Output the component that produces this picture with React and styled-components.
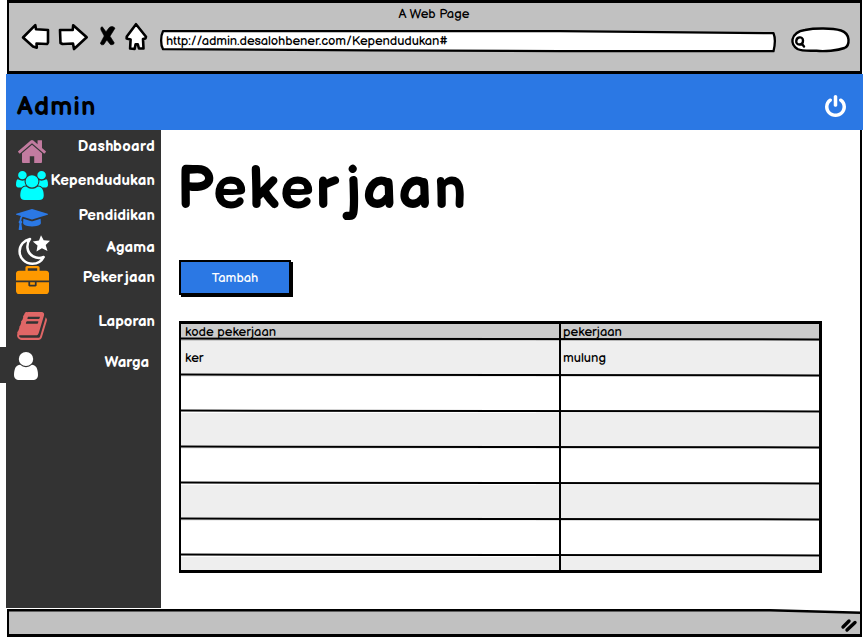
import React from 'react';
import styled, { createGlobalStyle } from 'styled-components';

const Global = createGlobalStyle`
  * { box-sizing: border-box; }
  body { margin: 0; background: #fff; color: #000; font-family: "Balsamiq Sans", Lato, sans-serif; overflow: hidden; }
  h1, h2, p { margin: 0; }
  svg { display: block; overflow: visible; flex: none; }
`;

const Page = styled.div`
  width: 863px;
  height: 638px;
  padding: 0 0 1px 6px;
  overflow: hidden;
  display: flex;
  flex-direction: column;
`;

const BrowserBar = styled.header`
  height: 74px;
  margin: 0 0 0 1px;
  width: 855px;
  padding-top: 4px;
  background: #c1c1c1;
  border: 3px solid #000;
  border-left-width: 2px;
  border-right-width: 2px;
  display: flex;
  flex-direction: column;
  flex: none;
`;

const PageTitle = styled.p`
  height: 16px;
  padding-right: 1px;
  text-align: center;
  font-size: 13px;
  line-height: 15px;
`;

const Controls = styled.div`
  display: flex;
  align-items: flex-start;
  padding: 0 9px 0 12px;
`;

const Buttons = styled.div`
  width: 139px;
  display: flex;
  align-items: flex-start;
  margin-top: -1px;
`;

const Address = styled.div`
  position: relative;
  width: 616px;
  height: 22px;
  margin-top: 7px;
  padding: 3px 0 0 6px;
  font-size: 13px;
  line-height: 17px;
  letter-spacing: -0.1px;
  white-space: nowrap;
`;

const AddressOutline = styled.svg`
  position: absolute;
  inset: 0;
`;

const AddressText = styled.span`
  position: relative;
`;

const Search = styled.div`
  margin: 4px 0 0 14px;
`;

const AppBar = styled.div`
  height: 56px;
  flex: none;
  display: flex;
  align-items: center;
  justify-content: space-between;
  padding: 8px 17px 0 11px;
  background: #2b78e4;
`;

const Brand = styled.h2`
  padding: 4px 0 0 0;
  font-size: 26px;
  line-height: 32px;
  font-weight: 700;
  letter-spacing: 1.1px;
`;

const Body = styled.div`
  display: flex;
  height: 479px;
  flex: none;
`;

const Sidebar = styled.nav`
  width: 155px;
  background: #333;
  height: 478px;
  flex: none;
  padding-top: 4px;
`;

const Item = styled.a`
  height: ${(p) => p.$h}px;
  display: flex;
  align-items: flex-start;
  justify-content: space-between;
  padding: 0 6px 0 ${(p) => p.$inset ?? 10}px;
  color: #fff;
  background: #333;
`;

const IconSlot = styled.span`
  display: block;
  flex: none;
  width: 33px;
  padding-top: ${(p) => p.$drop ?? 0}px;
`;

const Label = styled.span`
  padding-top: ${(p) => p.$drop ?? 1}px;
  font-size: 15px;
  line-height: 24px;
  font-weight: 700;
  letter-spacing: ${(p) => p.$spacing ?? 0.15}px;
  white-space: nowrap;
`;

const Outset = styled(Item)`
  margin-left: -6px;
  padding-left: 14px;
  padding-right: 12px;
`;

const Content = styled.main`
  width: 701px;
  padding: 20px 0 0 17px;
  border-right: 2px solid #000;
  margin-right: auto;
`;

const Heading = styled.h1`
  height: 80px;
  margin-left: -1px;
  padding-top: 5px;
  font-size: 59px;
  line-height: 72px;
  font-weight: 700;
  letter-spacing: 1.7px;
`;

const Wide = styled.span`
  letter-spacing: ${(p) => p.$spacing}px;
`;

const Button = styled.button`
  display: block;
  width: 112px;
  height: 35px;
  margin: 30px 0 0 1px;
  padding: 0;
  background: #2b78e4;
  border: 2px solid #000;
  box-shadow: 2px 2px 0 #000;
  color: #fff;
  font: 400 13px/30px "Balsamiq Sans", Lato, sans-serif;
`;

const Table = styled.div`
  width: 643px;
  height: 252px;
  margin: 26px 0 0 1px;
  border: 3px solid #000;
  border-left-width: 2px;
  overflow: hidden;
`;

const Row = styled.div`
  position: relative;
  display: grid;
  grid-template-columns: 380px 1fr;
  height: ${(p) => (p.$head ? 17 : 36)}px;
  line-height: ${(p) => (p.$head ? 16 : 34)}px;
  background: ${(p) => (p.$head ? '#ccc' : p.$shaded ? '#eee' : '#fff')};
  font-size: 13px;

  &::after {
    content: "";
    position: absolute;
    left: 0;
    right: 0;
    bottom: 1px;
    height: 2px;
    background: #000;
    transform: rotate(0.08deg);
    z-index: 1;
  }
`;

const Cell = styled.div`
  padding-left: ${(p) => (p.$first ? 4 : 2)}px;
  border-right: ${(p) => (p.$first ? '2px solid #000' : 'none')};
`;

const Footer = styled.footer`
  width: 855px;
  height: 28px;
  margin-left: 1px;
  flex: none;
  background: #c1c1c1;
  border: solid #000;
  border-width: 0 2px 3px;
`;

const home = 'M1472 992v480q0 26-19 45t-45 19h-384v-384h-256v384h-384q-26 0-45-19t-19-45v-480q0-1 .5-3t.5-3l575-474 575 474q1 2 1 6zm223-69l-62 74q-8 9-21 11h-3q-13 0-21-7l-692-577-692 577q-12 8-24 7-13-2-21-11l-62-74q-8-10-7-23.5t11-21.5l719-599q32-26 76-26t76 26l244 204v-195q0-14 9-23t23-9h192q14 0 23 9t9 23v408l219 182q10 8 11 21.5t-7 23.5z';
const users = 'M529 896q-162 5-265 128h-134q-82 0-138-40.5t-56-118.5q0-353 124-353 6 0 43.5 21t97.5 42.5 119 21.5q67 0 133-23-5 37-5 66 0 139 81 256zm1071 637q0 120-73 189.5t-194 69.5h-874q-121 0-194-69.5t-73-189.5q0-53 3.5-103.5t14-109 26.5-108.5 43-97.5 62-81 85.5-53.5 111.5-20q10 0 43 21.5t73 48 107 48 135 21.5 135-21.5 107-48 73-48 43-21.5q61 0 111.5 20t85.5 53.5 62 81 43 97.5 26.5 108.5 14 109 3.5 103.5zm-1024-1277q0 106-75 181t-181 75-181-75-75-181 75-181 181-75 181 75 75 181zm704 384q0 159-112.5 271.5t-271.5 112.5-271.5-112.5-112.5-271.5 112.5-271.5 271.5-112.5 271.5 112.5 112.5 271.5zm576 225q0 78-56 118.5t-138 40.5h-134q-103-123-265-128 81-117 81-256 0-29-5-66 66 23 133 23 59 0 119-21.5t97.5-42.5 43.5-21q124 0 124 353zm-128-609q0 106-75 181t-181 75-181-75-75-181 75-181 181-75 181 75 75 181z';
const cap = 'M1774 836l18 316q4 69-82 128t-235 93.5-323 34.5-323-34.5-235-93.5-82-128l18-316 574 181q22 7 48 7t48-7zm530-324q0 23-22 31l-1120 352q-4 1-10 1t-10-1l-652-206q-43 34-71 111.5t-34 178.5q63 36 63 109 0 69-58 107l58 433q2 14-8 25-9 11-24 11h-192q-15 0-24-11-10-11-8-25l58-433q-58-38-58-107 0-73 65-111 11-207 98-330l-333-104q-22-8-22-31t22-31l1120-352q4-1 10-1t10 1l1120 352q22 8 22 31z';
const briefcase = 'M640 256h512v-128h-512v128zm1152 640v480q0 66-47 113t-113 47h-1472q-66 0-113-47t-47-113v-480h672v160q0 26 19 45t45 19h320q26 0 45-19t19-45v-160h672zm-768 0v128h-256v-128h256zm768-480v384h-1792v-384q0-66 47-113t113-47h352v-160q0-40 28-68t68-28h576q40 0 68 28t28 68v160h352q66 0 113 47t47 113z';
const book = 'M1703 478q40 57 18 129l-275 906q-19 64-76.5 107.5t-122.5 43.5h-923q-77 0-148.5-53.5t-99.5-131.5q-24-67-2-127 0-4 3-27t4-37q1-8-3-21.5t-3-19.5q2-11 8-21t16.5-23.5 16.5-23.5q23-38 45-91.5t30-91.5q3-10 .5-30t-.5-28q3-11 17-28t17-23q21-36 42-92t25-90q1-9-2.5-32t.5-28q4-13 22-30.5t22-22.5q19-26 42.5-84.5t27.5-96.5q1-8-3-25.5t-2-26.5q2-8 9-18t18-23 17-21q8-12 16.5-30.5t15-35 16-36 19.5-32 26.5-23.5 36-11.5 47.5 5.5l-1 3q38-9 51-9h761q74 0 114 56t18 130l-274 906q-36 119-71.5 153.5t-128.5 34.5h-869q-27 0-38 15-11 16-1 43 24 70 144 70h923q29 0 56-15.5t35-41.5l300-987q7-22 5-57 38 15 59 43zm-1064 2q-4 13 2 22.5t20 9.5h608q13 0 25.5-9.5t16.5-22.5l21-64q4-13-2-22.5t-20-9.5h-608q-13 0-25.5 9.5t-16.5 22.5zm-83 256q-4 13 2 22.5t20 9.5h608q13 0 25.5-9.5t16.5-22.5l21-64q4-13-2-22.5t-20-9.5h-608q-13 0-25.5 9.5t-16.5 22.5z';
const user = 'M1536 1399q0 109-62.5 187t-150.5 78h-854q-88 0-150.5-78t-62.5-187q0-85 8.5-160.5t31.5-152 58.5-131 94-89 134.5-34.5q131 128 313 128t313-128q76 0 134.5 34.5t94 89 58.5 131 31.5 152 8.5 160.5zm-256-887q0 159-112.5 271.5t-271.5 112.5-271.5-112.5-112.5-271.5 112.5-271.5 271.5-112.5 271.5 112.5 112.5 271.5z';
const power = 'M1664 896q0 156-61 298t-164 245-245 164-298 61-298-61-245-164-164-245-61-298q0-182 80.5-343t226.5-270q43-32 95.5-25t83.5 50q32 42 24.5 94.5t-49.5 84.5q-98 74-151.5 181t-53.5 228q0 104 40.5 198.5t109.5 163.5 163.5 109.5 198.5 40.5 198.5-40.5 163.5-109.5 109.5-163.5 40.5-198.5q0-121-53.5-228t-151.5-181q-42-32-49.5-84.5t24.5-94.5q31-43 84-50t95 25q146 109 226.5 270t80.5 343zm-640-768v640q0 52-38 90t-90 38-90-38-38-90v-640q0-52 38-90t90-38 90 38 38 90z';

const Glyph = ({ d, box, w, h, color }) => (
  <svg width={w} height={h} viewBox={box} preserveAspectRatio="none" fill={color}>
    <path d={d} />
  </svg>
);

const MoonStar = () => (
  <svg width="33" height="31" viewBox="0 0 33 31">
    <path d="M13 4C7 5.300 2.600 10 2.600 16.300c0 7 5.700 12.500 12.800 12.500 5 0 9.200-2.600 11.300-6.800-7.500 3-15.300-1.700-16.200-9C10.100 9.500 11 6.500 13 4Z" fill="none" stroke="#fff" strokeWidth="2.500" strokeLinejoin="round" />
    <path d="M24 0.300l2.700 5 6.300.5-4.300 4.200 1.800 6-5.600-2.800-5.400 3.300 1-6-4.700-4.100 6.200-1Z" fill="#fff" />
  </svg>
);

const NavButtons = () => (
  <svg width="128" height="30" viewBox="21 22 128 30" fill="#fff" stroke="#000" strokeWidth="2.600" strokeLinejoin="round">
    <path d="M23 37.500L35.300 25.200l.7 4 12 .8v12.500l-.8 1.500-10.700-.5 .3 4.200-3.800-1.200Z" />
    <path d="M60 30l12.700 0 0.500-4.800L86.700 37.300 74 49l-1-5.500-10.500.5-2-1Z" />
    <path d="M102.300 26.800l3.700 5 3.300-4.300c2-1.500 4.200-1 5.700.7l-5 8 4.200 6.500c0 1.800-2 2.300-3.800 1.800l-3.600-4.500-3 4.500c-2 .8-3.500 0-3.300-1.500l3.700-7-3.200-6c-.5-1.500-.2-3.200 1.300-3.200Z" fill="#000" strokeWidth="0.600" />
    <path d="M136 24.200l10 12.500-.5 1.800-2.500.5.5 9.500h-4.500l-1.200-4.200h-2.200l-1 4.700-4.500-.5.500-9-4-1 .2-2Z" />
  </svg>
);

const SearchPill = () => (
  <svg width="60" height="26" viewBox="790 28 60 26" fill="none" stroke="#000" strokeWidth="2.400" strokeLinecap="round">
    <path d="M805 31c10-2 27-2 36 .5 5 1.500 7 4.500 7.500 9 .3 4-.5 7-4 8.500-7 2.500-20 3.800-28 2.800-8-.2-14.500.5-19-1.800-4-2.500-5.500-6-5-9.500 1-5 6-8.500 12.500-9.500Z" fill="#fff" />
    <path d="M799 38.500c2-.5 4 .5 4 3s-1 4-3.500 4-3.500-1.800-3.200-3.700 1-3 2.700-3.300ZM802 45l2 2.500" />
  </svg>
);

const FooterArt = () => (
  <svg width="851" height="25" viewBox="9 609 851 25">
    <path d="M161 609H860V612.500L770 610.300H161Z" fill="#fff" />
    <path d="M8 610.300H240L770 610.300L861 612.800" fill="none" stroke="#000" strokeWidth="2.600" />
    <path d="M843 627l6-6M847 630l8-7.500" stroke="#000" strokeWidth="3.400" strokeLinecap="round" />
  </svg>
);

export default function App() {
  return (
    <>
      <Global />
      <Page>
        <BrowserBar>
          <PageTitle>A Web Page</PageTitle>
          <Controls>
            <Buttons><NavButtons /></Buttons>
            <Address>
              <AddressOutline width="616" height="22" viewBox="160 30 616 22">
                <path d="M163 31.200H560L773.500 33.200C775.500 38 775 45 773.500 51.200H560L370 50.300 163 49.200C160.500 45 160.500 36 163 31.200Z" fill="#fff" stroke="#000" strokeWidth="2.300" strokeLinejoin="round" />
              </AddressOutline>
              <AddressText>http://admin.desalohbener.com/Kependudukan#</AddressText>
            </Address>
            <Search><SearchPill /></Search>
          </Controls>
        </BrowserBar>
        <AppBar>
          <Brand>Admin</Brand>
          <Glyph d={power} box="128 0 1536 1664" w={21} h={22} color="#fff" />
        </AppBar>
        <Body>
          <Sidebar>
            <Item $h={34} $inset={12}>
              <IconSlot $drop={6}><Glyph d={home} box="89 249 1614 1287" w={28} h={23} color="#c27ba0" /></IconSlot>
              <Label $spacing={0.3}>Dashboard</Label>
            </Item>
            <Item $h={35}>
              <IconSlot $drop={3}><Glyph d={users} box="-64 0 1920 1792" w={32} h={29} color="#00ffff" /></IconSlot>
              <Label>Kependudukan</Label>
            </Item>
            <Item $h={32}>
              <IconSlot $drop={6}><Glyph d={cap} box="0 128 2304 1536" w={32} h={21} color="#2b78e4" /></IconSlot>
              <Label>Pendidikan</Label>
            </Item>
            <Item $h={30} $inset={11}>
              <IconSlot><MoonStar /></IconSlot>
              <Label>Agama</Label>
            </Item>
            <Item $h={44}>
              <IconSlot $drop={1}><Glyph d={briefcase} box="0 0 1792 1536" w={33} h={28} color="#ff9900" /></IconSlot>
              <Label>Peke<Wide $spacing={1.8}>r</Wide>jaan</Label>
            </Item>
            <Item $h={38} $inset={11}>
              <IconSlot $drop={3}><Glyph d={book} box="60 128 1670 1536" w={30} h={28} color="#e06666" /></IconSlot>
              <Label $spacing={0}>Laporan</Label>
            </Item>
            <Outset $h={36}>
              <IconSlot $drop={5}><Glyph d={user} box="256 128 1280 1536" w={24} h={28} color="#fff" /></IconSlot>
              <Label $drop={4} $spacing={0}>Warga</Label>
            </Outset>
          </Sidebar>
          <Content>
            <Heading>Peke<Wide $spacing={6}>r</Wide>jaan</Heading>
            <Button>Tambah</Button>
            <Table>
              <Row $head><Cell $first>kode pekerjaan</Cell><Cell>pekerjaan</Cell></Row>
              <Row $shaded><Cell $first>ker</Cell><Cell>mulung</Cell></Row>
              {[false, true, false, true, false, true].map((shaded, i) => (
                <Row key={i} $shaded={shaded}><Cell $first /><Cell /></Row>
              ))}
            </Table>
          </Content>
        </Body>
        <Footer><FooterArt /></Footer>
      </Page>
    </>
  );
}
